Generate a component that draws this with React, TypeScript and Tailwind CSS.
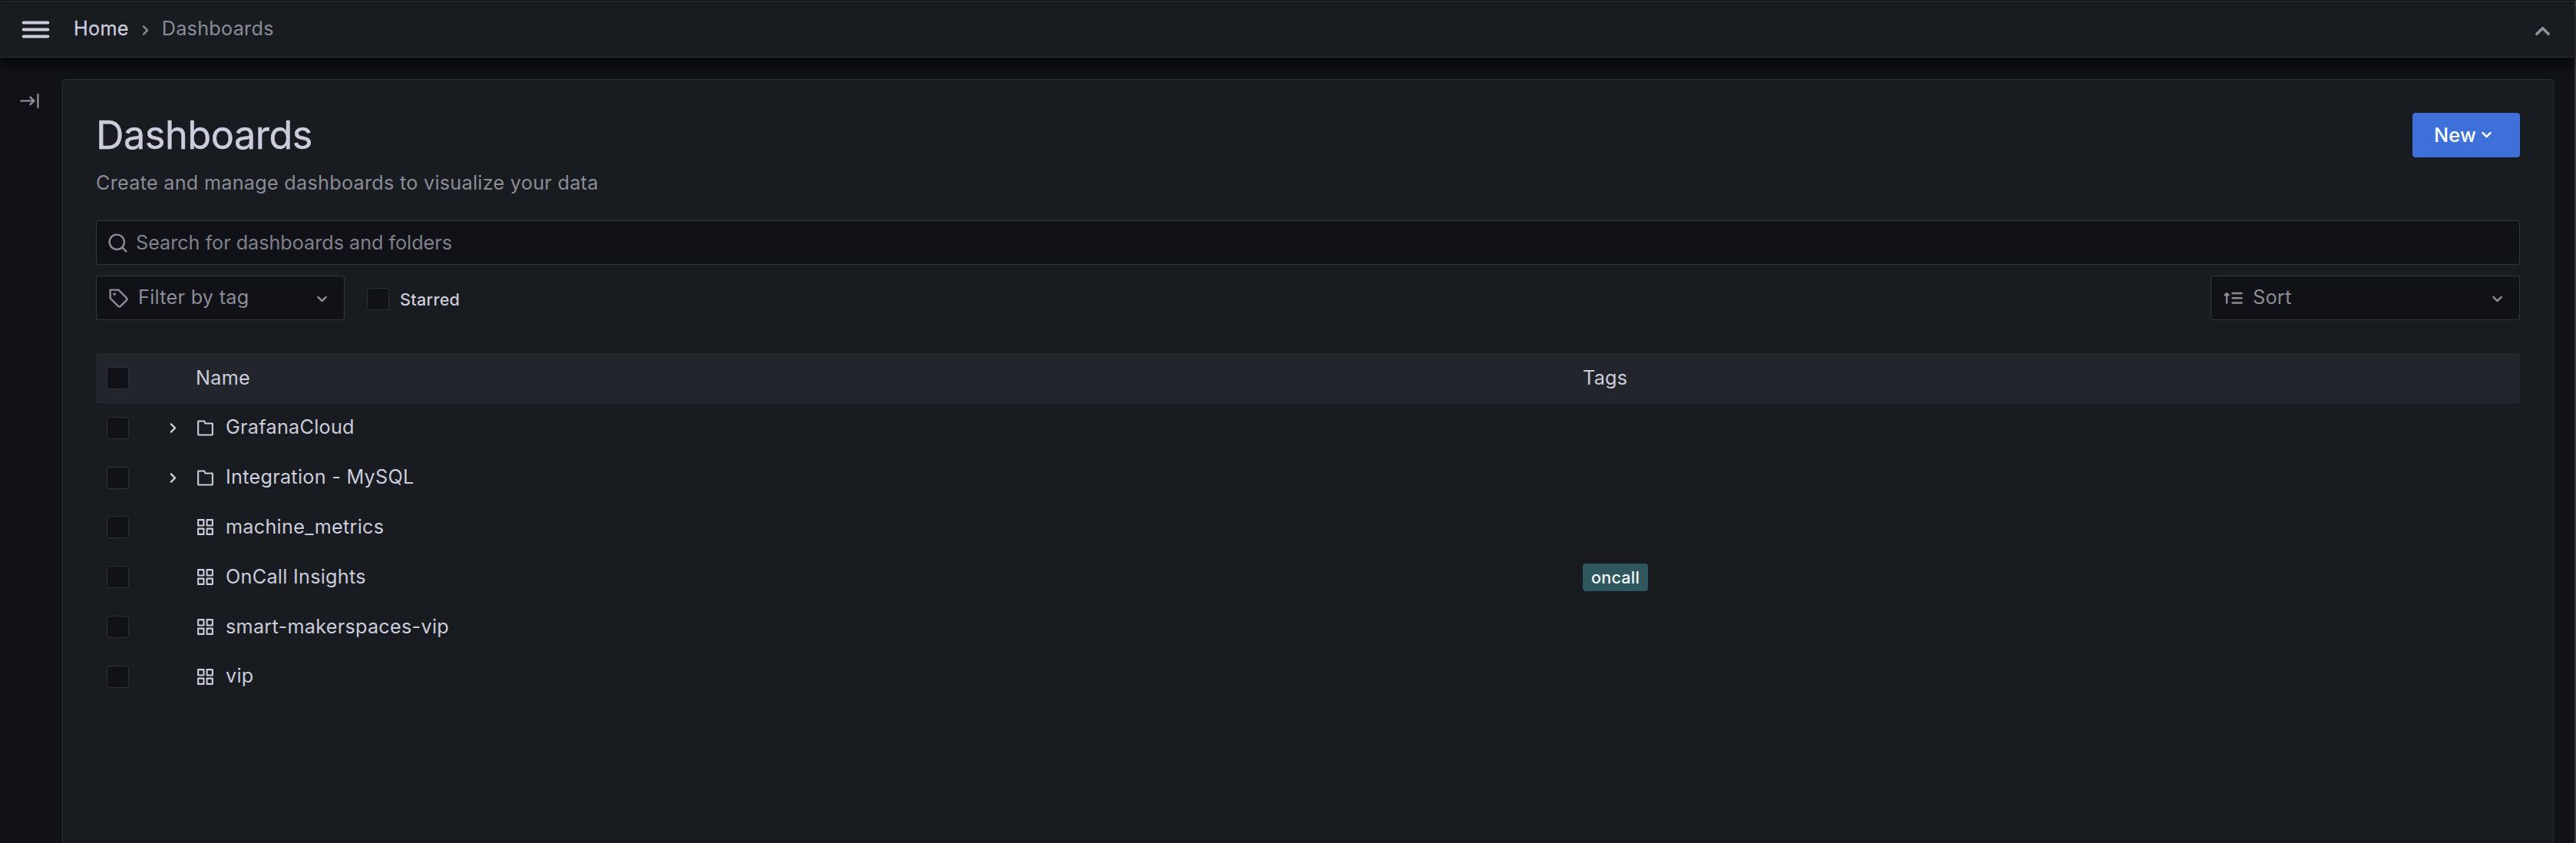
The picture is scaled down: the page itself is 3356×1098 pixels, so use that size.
import React from 'react';

const PATHS = {
  right:
    'M14.83,11.29,10.59,7.05a1,1,0,0,0-1.42,0,1,1,0,0,0,0,1.41L12.71,12,9.17,15.54a1,1,0,0,0,0,1.41,1,1,0,0,0,.71.29,1,1,0,0,0,.71-.29l4.24-4.24A1,1,0,0,0,14.83,11.29Z',
  down:
    'M17,9.17a1,1,0,0,0-1.41,0L12,12.71,8.46,9.17a1,1,0,0,0-1.41,0,1,1,0,0,0,0,1.42l4.24,4.24a1,1,0,0,0,1.42,0L17,10.59A1,1,0,0,0,17,9.17Z',
  up: 'M17,13.41,12.71,9.17a1,1,0,0,0-1.42,0L7.05,13.41a1,1,0,0,0,0,1.42,1,1,0,0,0,1.41,0L12,11.29l3.54,3.54a1,1,0,0,0,.7.29,1,1,0,0,0,.71-.29A1,1,0,0,0,17,13.41Z',
  search:
    'M21.71,20.29,18,16.61A9,9,0,1,0,16.61,18l3.68,3.68a1,1,0,0,0,1.42,0A1,1,0,0,0,21.71,20.29ZM11,18a7,7,0,1,1,7-7A7,7,0,0,1,11,18Z',
  apps: 'M10,13H3a1,1,0,0,0-1,1v7a1,1,0,0,0,1,1h7a1,1,0,0,0,1-1V14A1,1,0,0,0,10,13ZM9,20H4V15H9ZM21,2H14a1,1,0,0,0-1,1v7a1,1,0,0,0,1,1h7a1,1,0,0,0,1-1V3A1,1,0,0,0,21,2ZM20,9H15V4h5Zm1,4H14a1,1,0,0,0-1,1v7a1,1,0,0,0,1,1h7a1,1,0,0,0,1-1V14A1,1,0,0,0,21,13Zm-1,7H15V15h5ZM10,2H3A1,1,0,0,0,2,3v7a1,1,0,0,0,1,1h7a1,1,0,0,0,1-1V3A1,1,0,0,0,10,2ZM9,9H4V4H9Z',
  folder:
    'M20.6,5.3H12.6l-.6-1.9A1.5,1.5,0,0,0,10.6,2.4H3.4A1.4,1.4,0,0,0,2,3.8V20.2a1.4,1.4,0,0,0,1.4,1.4H20.6A1.4,1.4,0,0,0,22,20.2V6.7A1.4,1.4,0,0,0,20.6,5.3ZM20,19.6H4V4.4h6.2l.6,1.9a1.4,1.4,0,0,0,1.3,1H20Z',
  tag: 'M7.5,6A1.5,1.5,0,1,0,9,7.5,1.5,1.5,0,0,0,7.5,6Zm13.62,4.71L12.71,2.29A1,1,0,0,0,12,2H3A1,1,0,0,0,2,3v9a1,1,0,0,0,.29.71l8.42,8.41a3,3,0,0,0,4.24,0L21.12,15a3,3,0,0,0,0-4.24Zm-1.41,2.82h0l-6.18,6.17a1,1,0,0,1-1.41,0L4,11.59V4h7.59l8.12,8.12a1,1,0,0,1,.29.71A1,1,0,0,1,19.71,13.53Z',
};

function Icon({ name, className = '' }: { name: keyof typeof PATHS; className?: string }) {
  return (
    <svg viewBox="0 0 24 24" fill="currentColor" className={`shrink-0 ${className}`}>
      <path d={PATHS[name]} />
    </svg>
  );
}

function Checkbox() {
  return <span className="block size-[29px] shrink-0 rounded-[4px] border border-[#2f3137] bg-[#111217]" />;
}

type Row = { kind: 'folder' | 'dashboard'; name: string; tag?: string };

const ROWS: Row[] = [
  { kind: 'folder', name: 'GrafanaCloud' },
  { kind: 'folder', name: 'Integration - MySQL' },
  { kind: 'dashboard', name: 'machine_metrics' },
  { kind: 'dashboard', name: 'OnCall Insights', tag: 'oncall' },
  { kind: 'dashboard', name: 'smart-makerspaces-vip' },
  { kind: 'dashboard', name: 'vip' },
];

function TopBar() {
  return (
    <header className="relative z-10 flex h-[74px] shrink-0 items-center border-y border-[#2e3036] bg-[#181b1f] pr-[20px] pl-[25px] shadow-[0_7px_14px_1px_rgba(1,4,9,0.75)]">
      <svg viewBox="0 0 24 24" fill="none" stroke="currentColor" strokeWidth="2.3" strokeLinecap="round" className="size-[43px]">
        <path d="M3.2 7h17.6M3.2 12h17.6M3.2 17h17.6" />
      </svg>
      <nav className="ml-[28px] flex items-center">
        <span className="pb-[2px] [-webkit-text-stroke:0.3px]">Home</span>
        <Icon name="right" className="mt-[3px] ml-[7px] size-[29px] text-[#8a8b96]" />
        <span className="ml-[7px] pb-[2px] text-[#8b8c98]">Dashboards</span>
      </nav>
      <Icon name="up" className="mt-[4px] ml-auto size-[43px] text-[#8f909c]" />
    </header>
  );
}

function Filters() {
  return (
    <div className="mt-[14px] flex h-[58px] items-center">
      <div className="flex h-full w-[324px] items-center rounded-[4px] border border-[#35373d] bg-[#111217] pr-[14px] pl-[14px] text-[#8b8c98]">
        <Icon name="tag" className="size-[29px]" />
        <span className="ml-[11px] pb-[2px]">Filter by tag</span>
        <Icon name="down" className="mt-[2px] ml-auto size-[29px]" />
      </div>
      <label className="mt-[3px] ml-[29px] flex items-center">
        <Checkbox />
        <span className="ml-[14px] text-[21.6px] font-medium">Starred</span>
      </label>
      <div className="ml-auto flex h-full w-[403px] items-center rounded-[4px] border border-[#35373d] bg-[#111217] pr-[14px] pl-[14px] text-[#8b8c98]">
        <svg viewBox="0 0 29 29" fill="none" stroke="currentColor" strokeWidth="2.4" strokeLinecap="round" strokeLinejoin="round" className="size-[29px]">
          <path d="M13.5 8h12M13.5 14.3h12M13.5 20.5h12M6 20.5V8.5M3.6 10.4 6 8l2.4 2.4" />
        </svg>
        <span className="ml-[11px] pb-[2px]">Sort</span>
        <Icon name="down" className="mt-[2px] ml-auto size-[29px]" />
      </div>
    </div>
  );
}

function Table() {
  return (
    <div className="mt-[43px]">
      <div className="flex h-[65px] items-center bg-[#22252b] pl-[14px]">
        <Checkbox />
        <span className="ml-[87px] w-[1807px] pb-[2px]">Name</span>
        <span className="pb-[2px]">Tags</span>
      </div>
      {ROWS.map((row) => (
        <div key={row.name} className="flex h-[64.8px] items-center pl-[14px]">
          <Checkbox />
          <div className="ml-[44px] flex w-[43px] items-center">
            {row.kind === 'folder' && <Icon name="right" className="-ml-[1px] size-[29px]" />}
          </div>
          <div className="flex w-[1807px] items-center">
            <Icon name={row.kind === 'folder' ? 'folder' : 'apps'} className="size-[25px]" />
            <span className="ml-[14px] pb-[2px]">{row.name}</span>
          </div>
          {row.tag && (
            <span className="flex h-[36px] w-[85px] items-center justify-center rounded-[4px] bg-[#2f575e] text-[21.6px] font-medium tracking-[0.2px] text-[#f4f5f8]">
              {row.tag}
            </span>
          )}
        </div>
      ))}
    </div>
  );
}

export default function App() {
  return (
    <div className="flex h-[1098px] w-full flex-col overflow-hidden bg-[#111217] pt-px font-['Inter',sans-serif] text-[25.2px] leading-[40px] tracking-[0.28px] text-[#ccccdc]">
      <div className="flex min-h-0 flex-1">
        <div className="flex min-w-0 flex-1 flex-col">
          <TopBar />
          <div className="flex min-h-0 flex-1">
            <aside className="w-[81px] shrink-0 pt-[42px] pl-[24px] text-[#8b8c98]">
              <svg viewBox="0 0 29 29" fill="none" stroke="currentColor" strokeWidth="2.4" strokeLinecap="round" strokeLinejoin="round" className="size-[29px]">
                <path d="M3.4 14.4h16.4M15.4 9.6l5 4.8-5 4.8M25.4 6v17" />
              </svg>
            </aside>
            <main className="mt-[28px] mr-[27px] min-w-0 flex-1 rounded-t-[4px] border border-b-0 border-[#2e3036] bg-[#181b1f] px-[43px] pt-[43px]">
              <div className="flex items-start justify-between">
                <div>
                  <h1 className="text-[50.4px] leading-[58px] tracking-[-0.45px] [-webkit-text-stroke:0.4px]">Dashboards</h1>
                  <p className="mt-[13px] text-[#8b8c98]">Create and manage dashboards to visualize your data</p>
                </div>
                <button className="flex h-[58px] w-[140px] items-center rounded-[4px] bg-[#3d71d9] pl-[28px] font-medium text-white">
                  New
                  <Icon name="down" className="-ml-[1px] -mt-[1px] size-[29px]" />
                </button>
              </div>
              <div className="mt-[29px] flex h-[58px] items-center rounded-[4px] border border-[#35373d] bg-[#111217] pl-[13px]">
                <Icon name="search" className="size-[29px] text-[#8b8c98]" />
                <span className="ml-[9px] tracking-[-0.02px] text-[#7f808b]">Search for dashboards and folders</span>
              </div>
              <Filters />
              <Table />
            </main>
          </div>
        </div>
        <div className="w-[2px] shrink-0 bg-[#3b3c3f]" />
      </div>
    </div>
  );
}
